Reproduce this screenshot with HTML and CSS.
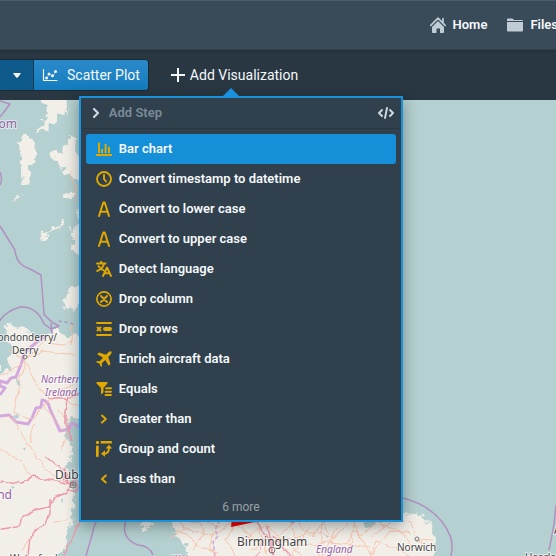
FILE: index.html
```html
<!DOCTYPE html>
<html lang="en">
<head>
<meta charset="utf-8">
<meta name="viewport" content="width=device-width, initial-scale=1">
<title>Map analysis</title>
<link rel="stylesheet" href="styles.css">
</head>
<body>
<header class="topbar">
  <nav class="nav">
    <a class="nav-link" href="#home">
      <svg class="icon" viewBox="0 0 16 16" aria-hidden="true"><path d="M2 10l6-6 6 6v5.2q0 .8-.8.8H10v-4.500H6.500V16H2.800q-.8 0-.8-.8z"/><path class="line" d="M.8 8.300L8 1.200l7.200 7.100M13 5V1.500" stroke-width="1.700"/></svg>
      Home</a>
    <a class="nav-link" href="#files">
      <svg class="icon" viewBox="0 0 16 16" aria-hidden="true"><path d="M0 4V2.500Q0 1.500 1 1.500h4.500l1.500 1.500h8q1 0 1 1zM0 5h16v8.500q0 1-1 1H1q-1 0-1-1z"/></svg>
      Files</a>
  </nav>
</header>

<div class="toolbar">
  <div class="button-group">
    <button class="tab tab-caret" type="button" aria-label="More views">
      <svg class="caret" viewBox="0 0 8 5" aria-hidden="true"><path d="M1 0h6q1.200.2.500 1.100L4.700 4.500q-.7.700-1.400 0L.5 1.100Q-.2.200 1 0z"/></svg>
    </button>
    <button class="tab tab-active" type="button">
      <svg class="icon" viewBox="0 0 16 16" aria-hidden="true"><path class="line" d="M1.500 2.500v11H15" stroke-width="1.200" stroke-linecap="butt"/><path class="line" d="M4.500 11l3-4 3.500 2 2.500-4.500" stroke-width=".5"/><circle cx="4.500" cy="11" r="1.500"/><circle cx="7" cy="7" r="1.500"/><circle cx="10.500" cy="8.800" r="1.500"/><circle cx="13.500" cy="4.500" r="1.500"/></svg>
      Scatter Plot</button>
  </div>
  <div class="add">
    <button class="add-button" type="button" aria-expanded="true">
      <svg class="icon-small" viewBox="0 0 14 14" aria-hidden="true"><path class="line" d="M7 0v14M0 7h14" stroke-width="2" stroke-linecap="butt"/></svg>
      Add Visualization</button>
    <div class="popover">
      <div class="search">
        <svg class="icon" viewBox="0 0 16 16" aria-hidden="true"><path class="line" d="M6 4l4 4-4 4" stroke-width="2.200"/></svg>
        <input class="search-input" type="text" placeholder="Add Step" aria-label="Add Step">
        <button class="code-button" type="button" aria-label="Code">
          <svg class="icon" viewBox="0 0 16 16" aria-hidden="true"><path class="line" d="M4 5L1 8l3 3M12 5l3 3-3 3M9 3L7 13" stroke-width="1.900"/></svg>
        </button>
      </div>
      <ul class="steps">
        <li><button class="step step-active" type="button"><svg class="icon" viewBox="0 0 16 16" aria-hidden="true"><path d="M0 13h16v2H0zM2 1.500h2V12H2zM5.200 8H7v4H5.200zM8.600 3h2v9h-2zM12 6h2v6h-2z"/></svg>Bar chart</button></li>
        <li><button class="step" type="button"><svg class="icon" viewBox="0 0 16 16" aria-hidden="true"><circle class="line" cx="8" cy="8" r="7" stroke-width="1.900"/><path class="line" d="M8 4v4l2 2.500" stroke-width="1.900"/></svg>Convert timestamp to datetime</button></li>
        <li><button class="step" type="button"><svg class="icon" viewBox="0 0 16 16" aria-hidden="true"><path class="line" d="M3 15L7.300 1.500h1.400L13 15M4.500 10.700h7" stroke-width="2"/></svg>Convert to lower case</button></li>
        <li><button class="step" type="button"><svg class="icon" viewBox="0 0 16 16" aria-hidden="true"><path class="line" d="M3 15L7.300 1.500h1.400L13 15M4.500 10.700h7" stroke-width="2"/></svg>Convert to upper case</button></li>
        <li><button class="step" type="button"><svg class="icon" viewBox="0 0 16 16" aria-hidden="true"><path class="line" d="M1 2.500h8.500M5 .8l1 1.700M8 3Q6.500 8 1.200 10M2.500 5q2 3.200 5 4.300M7 15l4-8.500L15 15M8.500 12.300h5" stroke-width="1.900"/></svg>Detect language</button></li>
        <li><button class="step" type="button"><svg class="icon" viewBox="0 0 16 16" aria-hidden="true"><circle class="line" cx="8" cy="8" r="7.100" stroke-width="1.700"/><path class="line" d="M5 5l6 6M11 5l-6 6" stroke-width="1.900"/></svg>Drop column</button></li>
        <li><button class="step" type="button"><svg class="icon" viewBox="0 0 16 16" aria-hidden="true"><path class="line" d="M1 2h14M1 14h14M1.500 6.500l3 3M4.500 6.500l-3 3" stroke-width="1.900"/><rect x="7" y="6" width="9" height="4" rx="2"/></svg>Drop rows</button></li>
        <li><button class="step" type="button"><svg class="icon" viewBox="0 0 16 16" aria-hidden="true"><path d="M15.500.5Q14 0 12.500 1.300L10 3.800 3 1.500 1.200 3.200 7 6.800 3.700 10.300 1 10 0 11l3.500 1.700L5 16l1-1-.2-2.700L9.200 9l3.600 5.800 1.700-1.800L12.200 6l2.500-2.500Q16 2 15.500.5z"/></svg>Enrich aircraft data</button></li>
        <li><button class="step" type="button"><svg class="icon" viewBox="0 0 16 16" aria-hidden="true"><path d="M1 1h10q1 .3.600 1.300L7.500 7v4.500l-2.500 2V7L.4 2.300Q0 1.300 1 1z"/><path class="line" d="M10 7.300h5M9.500 10.700h5.500M9.500 14h5.500" stroke-width="1.900"/></svg>Equals</button></li>
        <li><button class="step" type="button"><svg class="icon" viewBox="0 0 16 16" aria-hidden="true"><path class="line" d="M6 4.500L9.800 8 6 11.500" stroke-width="2"/></svg>Greater than</button></li>
        <li><button class="step" type="button"><svg class="icon" viewBox="0 0 16 16" aria-hidden="true"><rect width="3" height="3" rx="1"/><rect x="4.500" width="11.500" height="2.600" rx="1"/><rect y="4.500" width="2.700" height="11.500" rx="1"/><path class="line" d="M8 12.700q5-.2 5-6" stroke-width="1.900"/><path d="M9.600 7.500L13 3.800l3.200 3.700zM9 9.300v6.500L5 12.700z"/></svg>Group and count</button></li>
        <li><button class="step" type="button"><svg class="icon" viewBox="0 0 16 16" aria-hidden="true"><path class="line" d="M9.800 4.500L6 8l3.800 3.500" stroke-width="2"/></svg>Less than</button></li>
      </ul>
      <p class="more">6 more</p>
    </div>
  </div>
</div>

<main class="map">
  <svg class="map-canvas" viewBox="0 100 556 456" preserveAspectRatio="xMinYMin slice" role="img" aria-label="Map of Ireland and Great Britain">
    <defs>
      <!-- roughens coastlines and roads -->
      <filter id="coast" x="0" y="100" width="556" height="456" filterUnits="userSpaceOnUse" color-interpolation-filters="sRGB">
        <feTurbulence type="fractalNoise" baseFrequency="0.14" numOctaves="3" seed="4" result="noise"/>
        <feDisplacementMap in="SourceGraphic" in2="noise" scale="12" xChannelSelector="R" yChannelSelector="G"/>
      </filter>
      <filter id="winding" x="0" y="100" width="556" height="456" filterUnits="userSpaceOnUse" color-interpolation-filters="sRGB">
        <feTurbulence type="fractalNoise" baseFrequency="0.08" numOctaves="2" seed="7" result="noise"/>
        <feDisplacementMap in="SourceGraphic" in2="noise" scale="7" xChannelSelector="R" yChannelSelector="G"/>
      </filter>
    </defs>
    <!-- land -->
    <g class="land" filter="url(#coast)">
      <path d="M35 92h33l1 18-6 5-5-2-1 9-7 3-5 7-6-3 5-11 4-5-4-7zM27 136l7 4 2 20-6 6 1 17-9 2-2-21 2-12-6-8 7-6zM17 194l4 2-3 5-4-1zM69 134l5 7 2 10 7 9v20l-5 1-7-8-4 1-8-6-1-7-7-6 5-5 5 5 2-9 6-2zM66 190l7 2 1 5-5 3-4-5zM58 223l5-4 1 3-8 8-8 4v4l-7 1 1-5 8-2zM84 208l-7 5 4 8-10 7 1 8 5 3-7 10 8 5h8zM84 285l-13 2-4 8-6 7 3 5 6-2 3 5 8-8h6z"/>
      <path d="M-10 327l32-1 7 4 8 13 8-7 12-8 8 7 8 1h22v82l-28 2-2 18 8 11-4 17 5 32-4 30-5 18-11 20H-10z"/>
      <path d="M140 524l7-4 7 5-5 3-6 1zM175 512h227l18 3 11 8 5 18-4 25H188l-3-22-10-10-4-8z"/>
    </g>
    <g class="water" filter="url(#winding)">
      <path d="M0 326l7 3-2 12 8 7-5 11 4 12-7-4-5 8zM366 518l10 2-1 5-8 2-4-4zM326 535l4 1-2 2zM13 416l3-2 1 4-3 2zM23 448l3-2-1 5zM61 500l2-2 1 4-3 1zM16 378l5 3-3 3zM11 486l4 1-3 2z"/>
    </g>
    <!-- territorial boundaries -->
    <g class="boundary">
      <path d="M0 101l10 3L0 117M0 172q3 7 0 13M0 226l15 24q1 15 15 19l11 6 3 39q5 7 15 12l-8 3-7-5q-7-18-24-17-13 4-19 12L0 321M51 323l1 11M97 520q-4 7-5 15l-6 21M126 520q-6 18 12 25 12 1 15 10M403 498q37 10 48 40 2 8 0 18M556 505l-2 20-5 25"/>
      <path d="M59 321q8 1 17 4" stroke-dasharray="3 3"/>
    </g>
    <g class="border">
      <path d="M47 335l-9 6-14 12-2 9-6 15-5 1-4 5-7-2v5l5 2-5 7M0 416l9-1 7 7 12 2 4-6 4-10 5-1 1-7q6 0 8 9l4 9 6 13 9-2 3-6 7 4"/>
    </g>
    <g class="dashed">
      <path d="M220 520l-5 10 3 6-5 6 2 14"/>
    </g>
    <!-- roads -->
    <g class="road" filter="url(#winding)">
      <path d="M25 360l7 20 18 20-14 14-8 5-14-6zM0 375l14-8 13-8 17-17 20 2 9-5M25 360L8 350M27 359l15-8 33 4M49 400l8-8 16-8M50 400l11-4 20 11M9 415l15 23 21 30 9 8 13 6M43 404l9 14 14 15-1 13M0 450l21 12 11 14M54 523l12-5M29 538l-7 13M65 440l-4 11M70 420l-12-9M35 424l-4 18"/>
      <path d="M180 520q9-2 20 2l20 3M175 530l12 4 10 12 22 6M70 345q3-12 2-22M70 172l5 12 3 20"/>
      <path d="M170 538l15-9 27 7-4 10 9 10M184 529l-4-9M200 520l3 12-9 20M212 536l16-11 13 1 8 12 18-15 12 13 18-15 16 16 9-16 12 18 18-21 8 18 17-15 20 10 16 15M233 526l-7 14 10 16M242 528l30 26M257 521l10 34 13-18 20 18M291 520l3 18 29-7 17 19 16-20 15 25 5-14 25 9M322 520l-2 36M355 520l-7 36M370 538l24-18 17 2 5 15M396 548l15 8M370 556l20-25 20 4M311 528l-19 28M338 528l-15 28M251 550l20-13 30 5M300 545l30-3 40 5M417 539l14 1M417 539l10 10"/>
    </g>
    <g class="motorway" filter="url(#winding)">
      <path d="M0 481l21 2 12-7 34 7 7 1-7 9-14 6-4 7-12 3-16 10-4 8-17 2M50 499v15l-5 8-15 14-2 20M70 484l-8-16M72 440l-6-16 0-12 3-18M73 484q5-9 4 1t-9 3M46 456l12 10 8 15M81 519l-8 18-10 19M47 398h20l14-3"/>
      <path d="M253 520l14 15 7 21M267 535l-11 21M268 525l5 30M291 556l-18-20"/>
    </g>
    <path class="hull" d="M232 518h63l-2 5-3-2-30 0-29 6z"/>
    <g class="town"><circle cx="25" cy="357" r="2"/><circle cx="73" cy="485" r="3"/><circle cx="73" cy="485" r="1"/><circle cx="272" cy="550" r="3"/><circle cx="417" cy="539" r="2"/></g>
    <!-- place names -->
    <g class="place">
      <text class="md" x="57" y="341" text-anchor="end">Londonderry/</text>
      <text class="md" x="12" y="354">Derry</text>
      <text class="lg" x="55" y="479">Dublin</text>
      <text class="lg" x="237" y="546">Birmingham</text>
      <text class="md" x="397" y="551">Norwich</text>
      <text class="md" x="10" y="562">Waterford</text>
      <text class="md" x="525" y="561">Haarlem</text>
      <text class="md" x="554" y="534">Alkmaar</text>
    </g>
    <g class="region">
      <text class="strong" x="17" y="128" text-anchor="end">Kingdom</text>
      <text class="strong" x="12" y="499" text-anchor="end">Ireland</text>
      <text class="italic" x="41" y="383">Northern</text>
      <text class="italic" x="45" y="396">Ireland</text>
      <text class="italic" x="316" y="553">England</text>
      <text class="italic" x="171" y="563">Wales</text>
    </g>
  </svg>
</main>
</body>
</html>
```
FILE: styles.css
```css
* {
  box-sizing: border-box;
}

body {
  display: flex;
  flex-direction: column;
  min-height: 100vh;
  margin: 0;
  overflow: hidden;
  font-family: Roboto, "Liberation Sans", sans-serif;
  font-size: 13px;
  line-height: 18px;
  color: #f5f8fa;
  background: #b5d0d0;
}

button,
input {
  font: inherit;
  color: inherit;
  border: 0;
  margin: 0;
  padding: 0;
  background: none;
}

svg {
  display: block;
  flex: none;
  fill: currentColor;
}

.line {
  fill: none;
  stroke: currentColor;
  stroke-linecap: round;
  stroke-linejoin: round;
}

.icon {
  width: 16px;
  height: 16px;
}

.icon-small {
  width: 14px;
  height: 14px;
}

.topbar {
  display: flex;
  justify-content: flex-end;
  height: 50px;
  background: #394b59;
  border-top: 1px solid #4c5c68;
  border-bottom: 1px solid #30404d;
}

.nav {
  display: flex;
  align-items: center;
  gap: 20px;
  margin-right: -2px;
}

.nav-link {
  display: flex;
  align-items: center;
  gap: 7px;
  font-weight: 600;
  color: inherit;
  text-decoration: none;
}

.nav-link .icon {
  color: #bfccd6;
}

.toolbar {
  position: relative;
  z-index: 1;
  display: flex;
  align-items: center;
  gap: 22px;
  height: 50px;
  font-size: 14px;
  background: #293742;
  box-shadow: inset 0 2px 1px #24313b;
}

.button-group {
  display: flex;
  height: 32px;
  border: 1px solid #1d2a34;
  border-left: 0;
  border-radius: 0 4px 4px 0;
}

.tab {
  display: flex;
  align-items: center;
  gap: 9px;
  padding: 0 8px;
}

.tab-caret {
  justify-content: flex-end;
  width: 33px;
  padding-right: 12px;
  background: #0e5a8a;
}

.caret {
  width: 8px;
  height: 5px;
}

.tab-active {
  background: linear-gradient(#2b8aca, #137cbd);
  border-left: 1px solid #17384f;
  border-radius: 0 3px 3px 0;
}

.add {
  position: relative;
}

.add-button {
  display: flex;
  align-items: center;
  gap: 5px;
}

.popover {
  position: absolute;
  top: 30px;
  left: -92px;
  width: 324px;
  font-size: 13px;
  background: #30404d;
  border: 2px solid #1a91dc;
  box-shadow: 0 4px 14px rgba(16, 22, 26, 0.4);
}

.popover::before {
  content: "";
  position: absolute;
  top: -10px;
  left: 142px;
  border: 8px solid transparent;
  border-top: 0;
  border-bottom-color: #1a91dc;
}

.search {
  display: flex;
  align-items: center;
  gap: 5px;
  height: 31px;
  padding: 0 7px;
  border-bottom: 1px solid #293742;
  color: #ced9e0;
}

.search-input {
  flex: 1;
  min-width: 0;
  outline: 0;
}

.search-input::placeholder {
  color: #7b8b98;
  font-weight: 600;
  opacity: 1;
}

.steps {
  margin: 0;
  padding: 5px;
  list-style: none;
}

.step {
  display: flex;
  align-items: center;
  gap: 7px;
  width: 100%;
  height: 30px;
  padding: 0 10px;
  border-radius: 3px;
  font-weight: 600;
}

.step .icon {
  color: #e0a800;
}

.step-active {
  background: #168fd9;
}

.more {
  margin: 0;
  padding-bottom: 5px;
  font-size: 12px;
  line-height: 16px;
  text-align: center;
  color: #98a2a9;
}

.map {
  position: relative;
  flex: 1;
  overflow: hidden;
}

.map-canvas {
  position: absolute;
  inset: 0;
  width: 100%;
  height: 100%;
}

.land {
  fill: #f2efe9;
}

.water {
  fill: #b5d0d0;
}

.boundary,
.border,
.dashed,
.road,
.motorway {
  fill: none;
  stroke-linejoin: round;
}

.boundary {
  stroke: #b091c2;
  stroke-width: 1.5;
}

.border {
  stroke: #d4a8dc;
  stroke-width: 3;
}

.dashed {
  stroke: #d0a8dc;
  stroke-width: 1.5;
  stroke-dasharray: 4 2;
}

.road {
  stroke: #f8c6af;
  stroke-width: 1;
}

.motorway {
  stroke: #ee9aaa;
  stroke-width: 1.5;
}

.hull {
  fill: #f00000;
}

.town {
  fill: none;
  stroke: #777777;
  stroke-width: 1;
}

.place,
.region {
  font-family: "Noto Sans", sans-serif;
  paint-order: stroke;
  stroke: rgba(255, 255, 255, 0.6);
  stroke-width: 2px;
}

.place {
  fill: #444444;
}

.region {
  fill: #9461a5;
}

.md {
  font-size: 10px;
}

.lg {
  font-size: 12px;
}

.strong {
  font-size: 12px;
}

.italic {
  font-size: 10px;
  font-style: italic;
}
```
